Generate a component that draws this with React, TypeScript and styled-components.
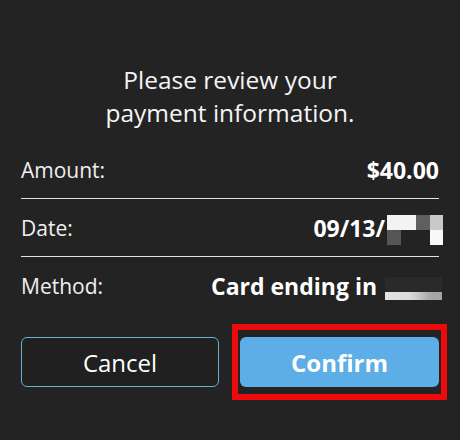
import * as React from "react";
import styled, { createGlobalStyle } from "styled-components";

const GlobalStyle = createGlobalStyle`
  html, body {
    margin: 0;
    padding: 0;
    background: #232323;
  }
  body {
    font-family: "Open Sans", "Liberation Sans", sans-serif;
    color: #f2f2f2;
  }
`;

const Screen = styled.div`
  width: 460px;
  height: 440px;
  box-sizing: border-box;
  padding: 63px 21px 0;
  background: #232323;
  overflow: hidden;
`;

const Heading = styled.h1`
  margin: 0 0 12px;
  font-size: 24.5px;
  line-height: 33px;
  font-weight: 400;
  text-align: center;
  color: #f4f4f4;
`;

const Row = styled.div<{ $last?: boolean }>`
  display: flex;
  align-items: center;
  justify-content: space-between;
  height: 57px;
  border-bottom: ${(p) => (p.$last ? "none" : "1px solid #e2e2e2")};
`;

const Label = styled.span`
  font-size: 21px;
  color: #f0f0f0;
`;

const Value = styled.span<{ $bleed?: number }>`
  display: inline-flex;
  align-items: center;
  font-size: 23px;
  font-weight: 700;
  color: #ffffff;
  margin-right: ${(p) => (p.$bleed ? -p.$bleed : 0)}px;
`;

const Pixels = styled.span<{ $cols: string; $rows: string; $shift: number }>`
  display: inline-grid;
  grid-template-columns: ${(p) => p.$cols};
  grid-template-rows: ${(p) => p.$rows};
  margin-left: 2px;
  transform: translateY(${(p) => p.$shift}px);
`;

const Cell = styled.span<{ $c: string }>`
  background: ${(p) => p.$c};
`;

const Strip = styled.span`
  background: linear-gradient(90deg, #e4e4e4 0%, #dadada 45%, #c6c6c6 60%, #a9a9a9 78%, #a4a4a4 100%);
`;

const Actions = styled.div`
  display: flex;
  justify-content: space-between;
  margin-top: 23px;
`;

const Button = styled.button<{ $primary?: boolean }>`
  box-sizing: border-box;
  width: 100%;
  height: 50px;
  padding: 0;
  border-radius: 6px;
  font-family: "Open Sans", "Liberation Sans", sans-serif;
  font-size: 24px;
  font-weight: ${(p) => (p.$primary ? 700 : 400)};
  color: #ffffff;
  background: ${(p) => (p.$primary ? "#5daee6" : "#202020")};
  border: ${(p) => (p.$primary ? "none" : "1.5px solid #6aaed4")};
  cursor: pointer;
`;

const Slot = styled.div<{ $w: number }>`
  width: ${(p) => p.$w}px;
  flex: none;
  display: flex;
  position: relative;
`;

const RedFrame = styled.span`
  position: absolute;
  top: -13px;
  bottom: -13px;
  left: -8px;
  right: -8px;
  border: 6px solid #ee0a0a;
  pointer-events: none;
`;

export default function App() {
  return (
    <>
      <GlobalStyle />
      <Screen>
        <Heading>
          Please review your
          <br />
          payment information.
        </Heading>
        <Row>
          <Label>Amount:</Label>
          <Value>$40.00</Value>
        </Row>
        <Row>
          <Label>Date:</Label>
          <Value $bleed={4}>
            09/13/
            <Pixels $cols="14px 15px 14px 13px" $rows="15px 15px" $shift={2}>
              <Cell $c="#f3f3f3" />
              <Cell $c="#f3f3f3" />
              <Cell $c="#5f5f5f" />
              <Cell $c="#c9c9c9" />
              <Cell $c="#555555" />
              <Cell $c="transparent" />
              <Cell $c="transparent" />
              <Cell $c="#f8f8f8" />
            </Pixels>
          </Value>
        </Row>
        <Row $last>
          <Label>Method:</Label>
          <Value $bleed={3}>
            Card ending in&nbsp;
            <Pixels $cols="57px" $rows="15px 8px" $shift={3}>
              <Cell $c="#2a2a2a" />
              <Strip />
            </Pixels>
          </Value>
        </Row>
        <Actions>
          <Slot $w={198}>
            <Button>Cancel</Button>
          </Slot>
          <Slot $w={199}>
            <Button $primary>Confirm</Button>
            <RedFrame />
          </Slot>
        </Actions>
      </Screen>
    </>
  );
}
